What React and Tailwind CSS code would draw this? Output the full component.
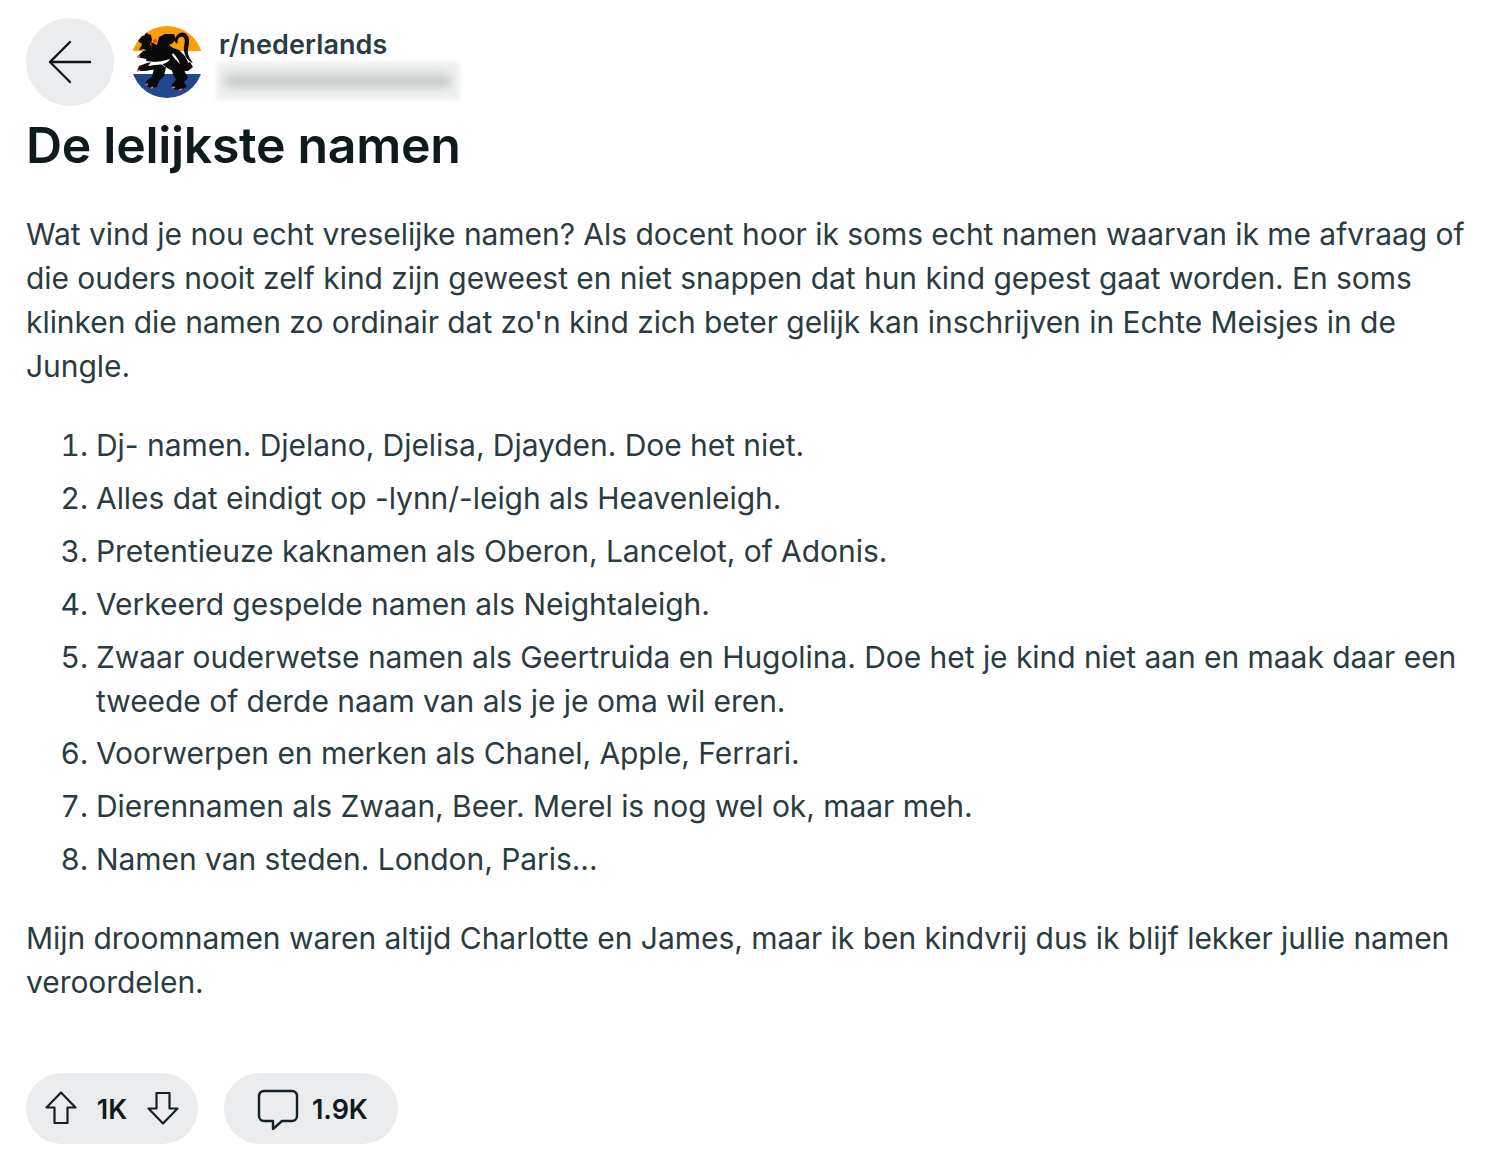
const listItems = [
  'Dj- namen. Djelano, Djelisa, Djayden. Doe het niet.',
  'Alles dat eindigt op -lynn/-leigh als Heavenleigh.',
  'Pretentieuze kaknamen als Oberon, Lancelot, of Adonis.',
  'Verkeerd gespelde namen als Neightaleigh.',
  'Zwaar ouderwetse namen als Geertruida en Hugolina. Doe het je kind niet aan en maak daar een tweede of derde naam van als je je oma wil eren.',
  'Voorwerpen en merken als Chanel, Apple, Ferrari.',
  'Dierennamen als Zwaan, Beer. Merel is nog wel ok, maar meh.',
  'Namen van steden. London, Paris...',
]

const LionAvatar = () => (
  <svg viewBox="0 0 72 72" className="w-[72px] h-[72px] shrink-0 rounded-full">
    <rect width="72" height="25" fill="#fb9d07" />
    <rect y="25" width="72" height="23" fill="#ffffff" />
    <rect y="48" width="72" height="24" fill="#23478f" />
    {/* mane and head */}
    <path d="M8 10 L13 10 L15 7 L20 9 L21 14 L19 18 L22 22 L17 26 L13 23 L8 24 L11 18 L7 15 Z" fill="#0a0a0a" />
    <path d="M20 16 L26 19 L28 11 L34 8 L43 8 L45 13 L42 17 L38 19 L42 22 L48 24 L54 30 L57 36 L55 43 L51 47 L44 46 L36 42 L30 37 L24 36 L15 35 L17 28 L21 24 Z" fill="#0a0a0a" />
    {/* forelegs reaching left */}
    <path d="M22 23 L12 25 L6 31 L15 33 L21 32 Z" fill="#0a0a0a" />
    <path d="M26 35 L16 37 L8 40 L6 45 L14 45 L26 43 L34 41 Z" fill="#0a0a0a" />
    {/* white stripe across the body */}
    <path d="M20 36 C27 36 33 35 39 33 C38 36 32 39 24 39 L17 40 Z" fill="#ffffff" />
    <path d="M42 27 C45 30 48 34 49 38 C46 35 43 32 41 29 Z" fill="#ffffff" />
    {/* hind legs */}
    <path d="M23 42 L35 41 L33 50 L28 55 L26 61 L20 62 L14 59 L16 54 L21 51 Z" fill="#0a0a0a" />
    <path d="M40 42 L53 44 L57 52 L53 56 L56 61 L49 64 L42 63 L41 58 L45 54 L42 48 Z" fill="#0a0a0a" />
    {/* tail */}
    <path d="M44 16 C44 9 49 5 54 7 C60 11 58 18 57 23 C56 28 59 33 62 37 C58 36 54 31 53 25 C52 19 56 14 52 11 C48 10 46 13 46.5 18 Z" fill="#0a0a0a" />
    <path d="M51 39 L59 36 L62 41 L57 45 L52 45 Z" fill="#0a0a0a" />
    {/* tongue and claws */}
    <circle cx="24" cy="15" r="2" fill="#e8384f" />
    <path d="M6 31 l3 -1 M6 45 l3 -1 M14 59 l3 -1 M41 62 l3 -1 M48 64 l3 -1 M20 62 l2 -1" stroke="#e8607a" strokeWidth="1.4" />
  </svg>
)

const ArrowUp = () => (
  <svg viewBox="0 0 32 34" className="w-8 h-[34px]" fill="none" stroke="#12202a" strokeWidth="2.2" strokeLinejoin="round">
    <path d="M16 1.5 L30.5 16.5 H22.5 V32 H9.5 V16.5 H1.5 Z" />
  </svg>
)

const ArrowDown = () => (
  <svg viewBox="0 0 32 34" className="w-8 h-[34px]" fill="none" stroke="#12202a" strokeWidth="2.2" strokeLinejoin="round">
    <path d="M16 32.5 L30.5 17.5 H22.5 V2 H9.5 V17.5 H1.5 Z" />
  </svg>
)

const CommentIcon = () => (
  <svg viewBox="0 0 42 42" className="w-[42px] h-[42px]" fill="none" stroke="#12202a" strokeWidth="2.4" strokeLinejoin="round">
    <path d="M7 2 H35 A5 5 0 0 1 40 7 V27 A5 5 0 0 1 35 32 H25 L16 40 V32 H7 A5 5 0 0 1 2 27 V7 A5 5 0 0 1 7 2 Z" />
  </svg>
)

export default function App() {
  return (
    <div className="w-[1490px] min-h-[1168px] bg-white pl-[26px] pr-[16px] pt-[18px] text-[#2a3c42] font-['Inter',sans-serif] antialiased tracking-[-0.05px]">
      <div className="flex items-center h-[88px]">
        <button className="w-[88px] h-[88px] rounded-full bg-[#eaecee] flex items-center justify-center shrink-0">
          <svg viewBox="0 0 44 44" className="w-11 h-11" fill="none" stroke="#0b1416" strokeWidth="2.4" strokeLinecap="round" strokeLinejoin="round">
            <path d="M42 22 H2 M22 2 L2 22 L22 42" />
          </svg>
        </button>
        <div className="ml-[17px]">
          <LionAvatar />
        </div>
        <div className="ml-[13px] w-[244px] self-start">
          <div className="pl-[3px] h-[44px] pt-[10px] text-[27px] leading-[34px] font-semibold text-[#2a3c42] tracking-[0.1px]">r/nederlands</div>
          <div className="h-[38px] bg-[#eff1f0] blur-[2px] flex items-center px-[8px]">
            <div className="w-full h-[14px] rounded-full bg-[#c6cacc] blur-[4px]" />
          </div>
        </div>
      </div>

      <h1 className="text-[50px] leading-[60px] mt-[9px] font-semibold text-[#0f1a1c] tracking-[-0.3px]">De lelijkste namen</h1>

      <p className="mt-[37px] text-[30px] leading-[44px]">
        Wat vind je nou echt vreselijke namen? Als docent hoor ik soms echt namen waarvan ik me afvraag of die ouders nooit zelf kind zijn geweest en niet snappen dat hun kind gepest gaat worden. En soms klinken die namen zo ordinair dat zo'n kind zich beter gelijk kan inschrijven in Echte Meisjes in de Jungle.
      </p>

      <ol className="mt-[35.4px] list-decimal pl-[70px] text-[30px] leading-[44px] flex flex-col gap-[8.8px]">
        {listItems.map((item) => (
          <li key={item}>{item}</li>
        ))}
      </ol>

      <p className="mt-[35px] text-[30px] leading-[44px]">
        Mijn droomnamen waren altijd Charlotte en James, maar ik ben kindvrij dus ik blijf lekker jullie namen veroordelen.
      </p>

      <div className="mt-[69px] flex gap-[26px] text-[#0f1a1c] text-[27px] font-semibold">
        <div className="w-[172px] h-[71px] rounded-full bg-[#eaecee] flex items-center pl-[19px] pr-[19px] justify-between">
          <ArrowUp />
          <span className="pt-[4px]">1K</span>
          <ArrowDown />
        </div>
        <div className="w-[174px] h-[71px] rounded-full bg-[#eaecee] flex items-center pl-[33px] pt-[3px] gap-[13px]">
          <CommentIcon />
          <span>1.9K</span>
        </div>
      </div>
    </div>
  )
}
